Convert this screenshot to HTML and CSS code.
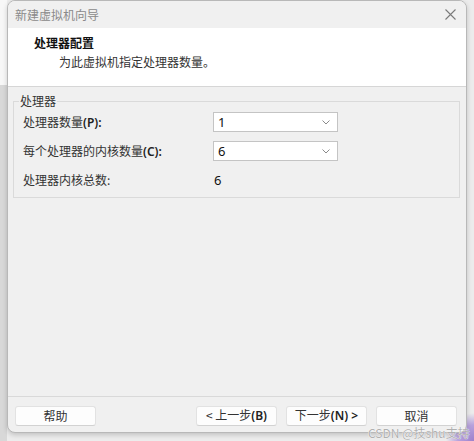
FILE: index.html
```html
<!DOCTYPE html>
<html lang="zh-CN">
<head>
  <meta charset="UTF-8">
  <title>新建虚拟机向导</title>
  <link rel="stylesheet" href="styles.css">
</head>
<body>
  <!-- Wizard window -->
  <div class="window">
    <div class="titlebar">
      <span class="title">新建虚拟机向导</span>
      <svg class="close" width="11" height="11" viewBox="0 0 11 11">
        <path d="M0.5 0.5 L10.5 10.5 M10.5 0.5 L0.5 10.5" stroke="#7a7a7a" stroke-width="1.1" fill="none"/>
      </svg>
    </div>

    <!-- Page heading -->
    <div class="header">
      <div class="heading">处理器配置</div>
      <div class="subtitle">为此虚拟机指定处理器数量。</div>
    </div>

    <!-- Page content -->
    <div class="content">
      <fieldset class="group">
        <legend>处理器</legend>
        <div class="rows">
          <label class="label">处理器数量<b>(P):</b></label>
          <div class="combo">
            <span>1</span>
            <svg width="8" height="5" viewBox="0 0 8 5"><polyline points="0.5,0.5 4,4 7.5,0.5" stroke="#8a8a8a" fill="none"/></svg>
          </div>

          <label class="label">每个处理器的内核数量<b>(C):</b></label>
          <div class="combo">
            <span>6</span>
            <svg width="8" height="5" viewBox="0 0 8 5"><polyline points="0.5,0.5 4,4 7.5,0.5" stroke="#8a8a8a" fill="none"/></svg>
          </div>

          <span class="label">处理器内核总数:</span>
          <span class="value">6</span>
        </div>
      </fieldset>
    </div>

    <!-- Wizard buttons -->
    <div class="footer">
      <button class="btn">帮助</button>
      <button class="btn push">&lt; 上一步<b>(B)</b></button>
      <button class="btn">下一步<b>(N) &gt;</b></button>
      <button class="btn">取消</button>
    </div>
  </div>

  <div class="watermark">CSDN @技shu支持</div>
</body>
</html>
```

FILE: styles.css
```css
/* General */
body {
  margin: 0;
  width: 474px;
  height: 441px;
  position: relative;
  overflow: hidden;
  font-family: "Noto Sans CJK SC", "Noto Sans", sans-serif;
  font-size: 12px;
  color: #333;
  background:
    radial-gradient(circle at 100% 100%, #9d80cc 0, #b8a2dd 16px, rgba(200, 185, 230, 0) 28px),
    linear-gradient(to bottom, #f7f7f7 85px, #d8d8d8 85px) left top / 7px 100% no-repeat,
    #ececec;
}

/* Latin parts of labels render a bit heavier */
.label b,
.btn b {
  font-family: "Noto Sans", sans-serif;
  font-weight: 600;
  color: #222;
}

/* Window frame */
.window {
  width: 460px;
  height: 433px;
  margin-left: 7px;
  box-sizing: border-box;
  border: 1px solid #b8b8b8;
  border-radius: 8px;
  overflow: hidden;
  background: #f0f0f0;
  box-shadow: 0 2px 5px rgba(0, 0, 0, 0.18);
  display: flex;
  flex-direction: column;
}

.titlebar {
  height: 27px;
  flex: none;
  display: flex;
  align-items: center;
  justify-content: space-between;
  padding: 0 10px 0 7px;
  background: #f0f0f0;
}

.title {
  color: #8a8a8a;
  line-height: 16px;
}

/* Heading area */
.header {
  height: 59px;
  flex: none;
  box-sizing: border-box;
  padding: 6px 0 0 26px;
  background: #fff;
  border-bottom: 1px solid #d6d6d6;
}

.heading {
  font-weight: bold;
  color: #111;
  line-height: 18px;
}

.subtitle {
  margin: 1px 0 0 25px;
  line-height: 18px;
  color: #333;
}

/* Content area */
.content {
  flex: 1;
  padding: 7px 6px 0 5px;
}

.group {
  margin: 0;
  padding: 4px 5px 7px 5px;
  border: 1px solid #dadada;
}

.group legend {
  padding: 0 1px;
  line-height: 14px;
  color: #333;
}

.rows {
  display: grid;
  grid-template-columns: 190px 125px;
  grid-auto-rows: 20px;
  row-gap: 9px;
  align-items: center;
  padding-left: 4px;
}

.label {
  line-height: 20px;
  color: #333;
}

.combo {
  height: 20px;
  box-sizing: border-box;
  border: 1px solid #c4c4c4;
  background: #fff;
  display: flex;
  align-items: center;
  justify-content: space-between;
  padding: 0 7px 0 4px;
  font-family: "Noto Sans", sans-serif;
  font-size: 13px;
  color: #111;
}

.value {
  padding-left: 1px;
  font-family: "Noto Sans", sans-serif;
  font-size: 13px;
  color: #111;
  line-height: 20px;
}

/* Buttons row */
.footer {
  flex: none;
  display: flex;
  gap: 9px;
  padding: 9px 9px 6px 7px;
  border-top: 1px solid #d9d9d9;
}

.btn {
  width: 81px;
  height: 20px;
  padding: 0 0 1px;
  border: 1px solid #e2e2e2;
  border-bottom-color: #d2d2d2;
  border-radius: 3px;
  background: #fdfdfd;
  font-family: "Noto Sans CJK SC", "Noto Sans", sans-serif;
  font-size: 12px;
  line-height: 16px;
  color: #333;
}

.btn.push {
  margin-left: auto;
}

/* Overlay text in the corner */
.watermark {
  position: absolute;
  left: 368px;
  top: 427px;
  font-size: 12px;
  line-height: 12px;
  color: #b0b0b0;
  text-shadow: 0 0 1px #fff, 0 0 1px #fff;
}
```
